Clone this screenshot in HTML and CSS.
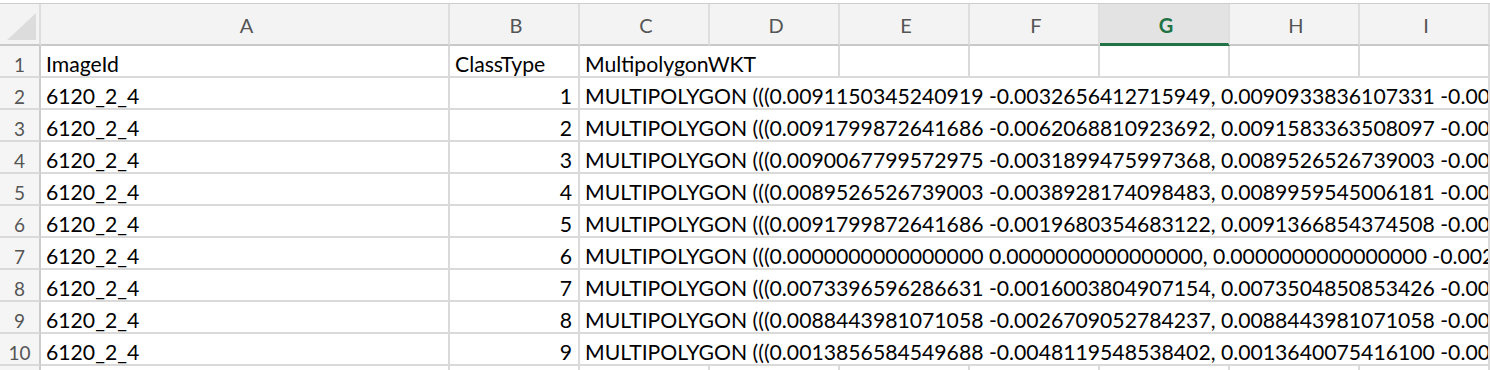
FILE: index.html
```html
<!DOCTYPE html>
<html lang="en">
<head>
    <meta charset="UTF-8">
    <meta name="viewport" content="width=device-width, initial-scale=1.0">
    <title>train_wkt_v4.csv</title>
    <link rel="stylesheet" href="styles.css">
</head>
<body>

    <div class="sheet">
        <!-- column headers -->
        <div class="row head-row">
            <div class="corner"><div class="corner-tri"></div></div>
            <div class="col-head">A</div>
            <div class="col-head">B</div>
            <div class="col-head">C</div>
            <div class="col-head">D</div>
            <div class="col-head">E</div>
            <div class="col-head">F</div>
            <div class="col-head selected">G</div>
            <div class="col-head">H</div>
            <div class="col-head">I</div>
            <div class="col-head"></div>
        </div>

        <div class="row">
            <div class="row-num">1</div>
            <div class="cell">ImageId</div>
            <div class="cell">ClassType</div>
            <div class="cell title">MultipolygonWKT</div>
            <div class="cell"></div>
            <div class="cell"></div>
            <div class="cell"></div>
            <div class="cell"></div>
            <div class="cell"></div>
            <div class="cell"></div>
        </div>

        <div class="row">
            <div class="row-num">2</div>
            <div class="cell">6120_2_4</div>
            <div class="cell num">1</div>
            <div class="cell wkt">MULTIPOLYGON (((0.0091150345240919 -0.0032656412715949, 0.0090933836107331 -0.0032873085531891, 0.0090500817840153 -0.0033089758347833</div>
        </div>

        <div class="row">
            <div class="row-num">3</div>
            <div class="cell">6120_2_4</div>
            <div class="cell num">2</div>
            <div class="cell wkt">MULTIPOLYGON (((0.0091799872641686 -0.0062068810923692, 0.0091583363508097 -0.0062285483739634, 0.0091366854374508 -0.0062502156555576</div>
        </div>

        <div class="row">
            <div class="row-num">4</div>
            <div class="cell">6120_2_4</div>
            <div class="cell num">3</div>
            <div class="cell wkt">MULTIPOLYGON (((0.0090067799572975 -0.0031899475997368, 0.0089526526739003 -0.0032116148813310, 0.0089093508471825 -0.0032332821629252</div>
        </div>

        <div class="row">
            <div class="row-num">5</div>
            <div class="cell">6120_2_4</div>
            <div class="cell num">4</div>
            <div class="cell wkt">MULTIPOLYGON (((0.0089526526739003 -0.0038928174098483, 0.0089959545006181 -0.0039144846914425, 0.0090392563273359 -0.0039361519730367</div>
        </div>

        <div class="row">
            <div class="row-num">6</div>
            <div class="cell">6120_2_4</div>
            <div class="cell num">5</div>
            <div class="cell wkt">MULTIPOLYGON (((0.0091799872641686 -0.0019680354683122, 0.0091366854374508 -0.0019897027499064, 0.0090933836107331 -0.0020113700315006</div>
        </div>

        <div class="row">
            <div class="row-num">7</div>
            <div class="cell">6120_2_4</div>
            <div class="cell num">6</div>
            <div class="cell wkt">MULTIPOLYGON (((0.0000000000000000 0.0000000000000000, 0.0000000000000000 -0.0027091052784237, 0.0000216509133589 -0.0027307725600179</div>
        </div>

        <div class="row">
            <div class="row-num">8</div>
            <div class="cell">6120_2_4</div>
            <div class="cell num">7</div>
            <div class="cell wkt">MULTIPOLYGON (((0.0073396596286631 -0.0016003804907154, 0.0073504850853426 -0.0016220477723096, 0.0073721359987015 -0.0016437150539038</div>
        </div>

        <div class="row">
            <div class="row-num">9</div>
            <div class="cell">6120_2_4</div>
            <div class="cell num">8</div>
            <div class="cell wkt">MULTIPOLYGON (((0.0088443981071058 -0.0026709052784237, 0.0088443981071058 -0.0026925725600179, 0.0088227471937469 -0.0027142398416121</div>
        </div>

        <div class="row">
            <div class="row-num">10</div>
            <div class="cell">6120_2_4</div>
            <div class="cell num">9</div>
            <div class="cell wkt">MULTIPOLYGON (((0.0013856584549688 -0.0048119548538402, 0.0013640075416100 -0.0048336221354344, 0.0013423566282511 -0.0048552894170286</div>
        </div>

        <div class="row">
            <div class="row-num">11</div>
            <div class="cell"></div>
            <div class="cell"></div>
            <div class="cell"></div>
            <div class="cell"></div>
            <div class="cell"></div>
            <div class="cell"></div>
            <div class="cell"></div>
            <div class="cell"></div>
            <div class="cell"></div>
            <div class="cell"></div>
        </div>
    </div>

</body>
</html>
```

FILE: styles.css
```css
body {
    margin: 0;
    background-color: #ffffff;
    font-family: Lato, "Liberation Sans", sans-serif;
    color: #000000;
    overflow: hidden;
}

.sheet {
    margin-top: 3px;
    border-top: 1px solid #cdcdcd;
}

.row {
    display: grid;
    grid-template-columns: 41px 409px repeat(8, 130px) 1fr;
    height: 32px;
}

.row > div {
    box-sizing: border-box;
    border-right: 2px solid #dadada;
    border-bottom: 2px solid #dadada;
    overflow: hidden;
    white-space: nowrap;
}

.head-row {
    height: 42px;
}

.head-row > div {
    background-color: #f3f3f3;
    border-right-color: #dedede;
    border-bottom-color: #c9c9c9;
}

.corner-tri {
    width: 29px;
    height: 27px;
    margin: 9px 0 0 7px;
    background-color: #dcdcdc;
    clip-path: polygon(100% 0, 100% 100%, 0 100%);
}

.col-head {
    text-align: center;
    font-size: 20px;
    line-height: 38px;
    padding-top: 2px;
    padding-left: 4px;
    color: #555555;
}

.col-head.selected {
    background-color: #e3e3e3;
    color: #217346;
    font-weight: bold;
    border-bottom: 3px solid #217346;
}

.row-num {
    background-color: #f5f5f5;
    text-align: center;
    font-size: 19px;
    line-height: 23px;
    padding-top: 7px;
    color: #555555;
    border-right-color: #cccccc !important;
}

.cell {
    font-size: 21.2px;
    line-height: 23px;
    padding: 7px 6px 0 5px;
}

.cell.num {
    text-align: right;
}

.cell.title {
    grid-column: span 2;
}

.cell.wkt {
    grid-column: 4 / -1;
}
```
